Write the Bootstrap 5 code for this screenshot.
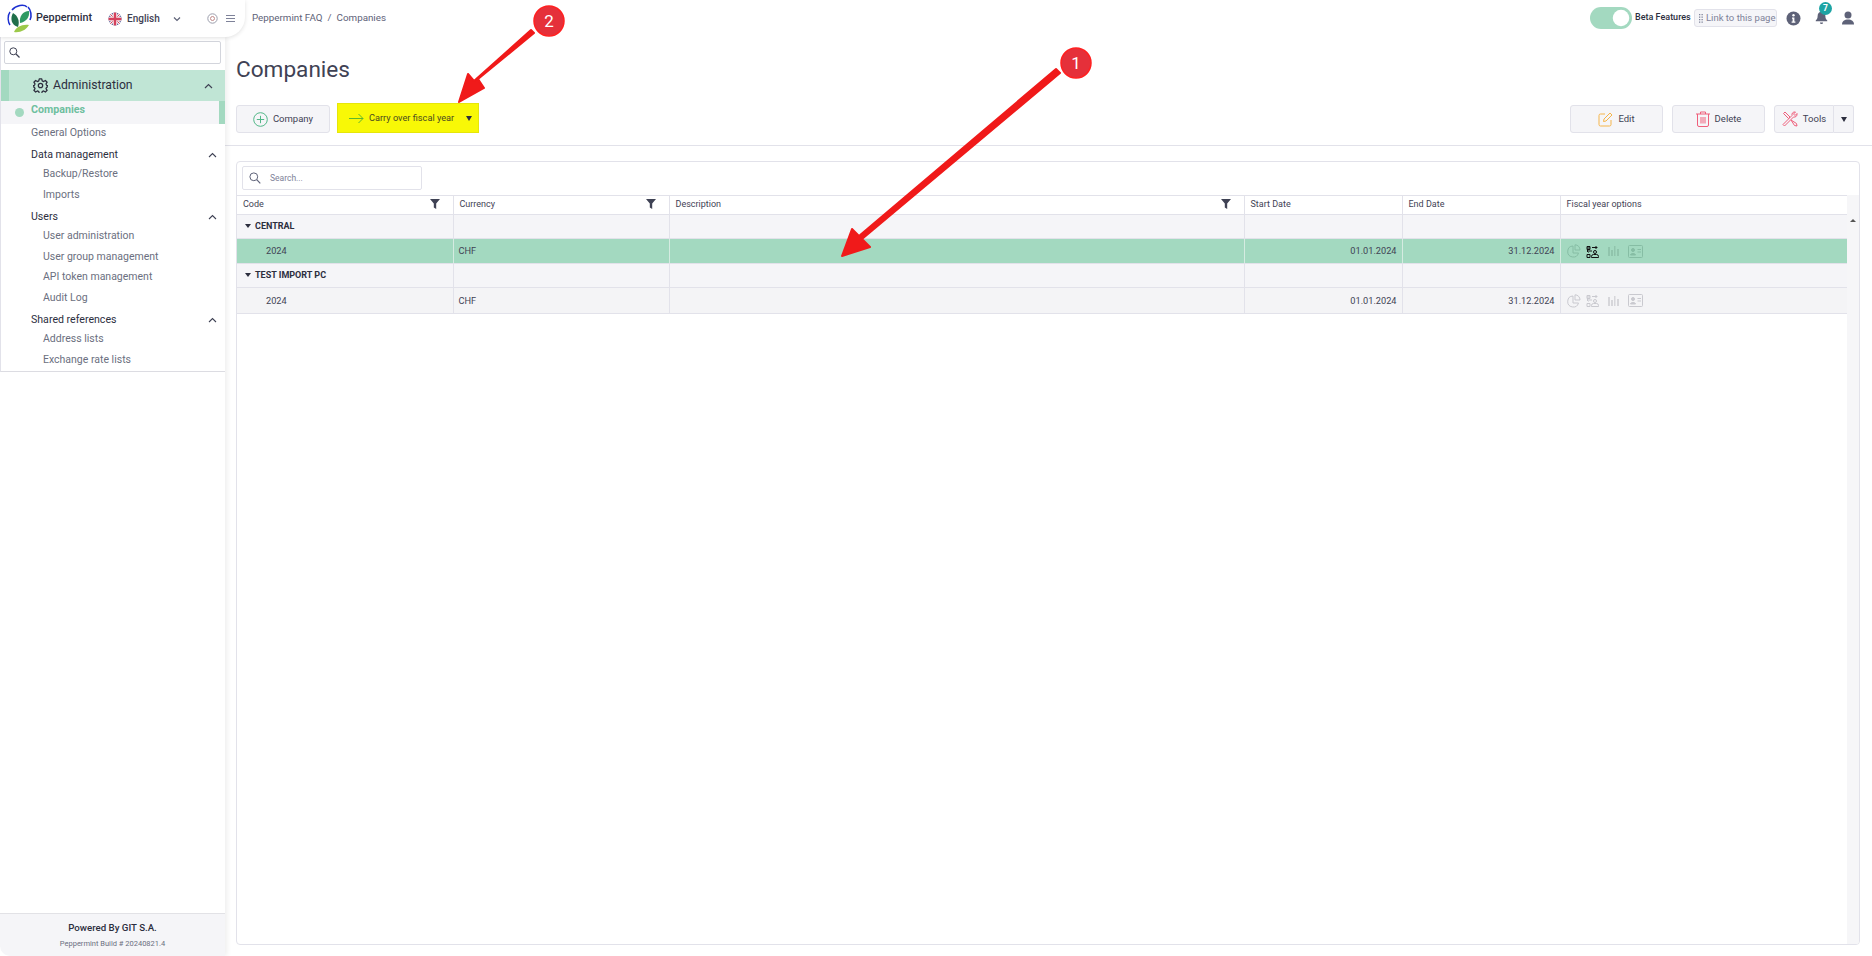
<!DOCTYPE html>
<html lang="en"><head><meta charset="utf-8"><title>Companies</title>
<link href="https://cdn.jsdelivr.net/npm/bootstrap@5.3.0/dist/css/bootstrap.min.css" rel="stylesheet">
<style>
html,body{height:100%;overflow:hidden}
body{font-family:Roboto,"Liberation Sans",sans-serif;background:#fff;color:#3f4254;font-size:12px;width:1872px;height:956px}
.frame{height:956px;position:relative}
.topbar{height:37px}
.brandbox{width:245px;height:37px;background:#fff;border-bottom-right-radius:20px;box-shadow:0 1px 4px rgba(0,0,0,.12);padding-left:7px;z-index:3;position:relative}
.brandname{font-size:10.8px;font-weight:500;color:#2c2e3e;margin-left:3px;width:72px}
.langname{font-size:10px;font-weight:500;color:#3f4254;margin-left:5px;width:46px}
.ringicon{margin-left:26px}
.crumbs{font-size:9.8px;color:#5e6278;margin-left:7px;--bs-breadcrumb-margin-bottom:0;--bs-breadcrumb-item-padding-x:5px;--bs-breadcrumb-divider-color:#5e6278}
.crumbs .breadcrumb-item{color:#5e6278}
.beta-switch{padding:0;margin:0;min-height:0;height:22px}
.beta-switch .form-check-input{width:42px;height:22px;margin:0;background-color:#a3d9c0;border:0;float:none;display:block}
.betatext{font-size:9px;font-weight:500;color:#2c2e3e;margin-left:3px;margin-right:4px;width:55px;white-space:nowrap}
.linkpage{font-size:9.5px;color:#7e8299;background:#f5f5f8;border:1px solid #e2e2ea;border-radius:3px;height:18px;width:83px;padding:0 0 0 4px;display:inline-flex;align-items:center;gap:3px;white-space:nowrap}
.topright{padding-right:18px;padding-bottom:1px}
.infoicon{margin-left:9px}
.bellwrap{position:relative;margin-left:14px;margin-right:14px;width:13px;height:14px}
.notebadge{position:absolute;top:-9px;left:4px;width:13px;height:13px;border-radius:50%;background:#1da4a4;color:#fff;font-size:8.5px;line-height:13px;padding:0;font-weight:700;--bs-badge-padding-x:0;--bs-badge-padding-y:0}
.bodyrow{height:919px}
.sidepane{width:225px;background:#fff;box-shadow:2px 0 5px rgba(0,0,0,.07);z-index:2}
.sidemenu{border-bottom:1px solid #dcdce2;border-left:1px solid #e2e2ea;padding-bottom:1px}
.sidesearch{margin:4px 4px 6px 3px;height:23px;border:1px solid #d3d5dc;border-radius:2px;padding-left:4px}
.adminbar{height:31px;background:#c0e5d5;border-left:8px solid #a3d9c0;font-size:12.2px;color:#2c2e3e;padding-left:24px;padding-right:12px}
.adminbar span{margin-left:5px}
.activeitem{height:23px;background:#f5f5f8;border-right:6px solid #a3d9c0;line-height:18px;font-weight:700;font-size:10.7px;color:#6fbf9f;padding-left:30px;position:relative}
.activedot{position:absolute;left:14px;top:7px;width:9px;height:9px;border-radius:50%;background:#a3d9c0}
.genitem{height:17px;line-height:17px;margin-bottom:4px;padding-left:30px;color:#6b6f80;font-size:10.6px}
.groupitem{height:20px;line-height:20px;margin-top:2px;margin-bottom:-1px;padding-left:30px;padding-right:8px;color:#2c2e3e;font-size:10.6px}
.subitem{height:20.5px;line-height:20.5px;padding-left:42px;color:#6b6f80;font-size:10.5px}
.sidefoot{height:43px;background:#f5f5f8;border-top:1px solid #e2e2e6;border-bottom-left-radius:10px;color:#2c2e3e}
.sidefoot .poweredline{font-size:9.7px;font-weight:500;line-height:15px;margin-top:6px}
.sidefoot .buildline{font-size:7.5px;color:#6b6f80;line-height:12px;margin-top:3px}
.mainpane{min-width:0}
.pagetitle{font-size:22.6px;font-weight:400;color:#3f4254;margin:0;padding-left:11px;height:68px;line-height:30px;padding-top:18px}
.actionbar{height:41px;border-bottom:1px solid #e2e2ea;padding-left:11px;padding-right:18px;align-items:flex-start}
.actbtn{height:28px;background:#f5f5f8;border:1px solid #e2e2ea;border-radius:3px;font-size:9.5px;color:#3f4254;padding:0;display:inline-flex;align-items:center;justify-content:center;gap:5px;--bs-btn-hover-bg:#f5f5f8}
.btn-company{width:94px}
.yellowgroup{margin-left:7px;margin-top:-2px;height:30px;width:142px;background:#f8f806;border:1px solid #e6e60a;display:flex;align-items:center;color:#4a4a20;border-radius:0}
.yellowmain{flex:1;height:100%;background:transparent;border:0;font-size:9.2px;color:#4a4a20;padding:0 0 0 11px;display:flex;align-items:center;gap:5px;white-space:nowrap}
.caretbtn{width:19px;height:100%;background:transparent;border:0;padding:0;display:flex;align-items:center;justify-content:center}
.caretshape{width:0;height:0;border-left:3.5px solid transparent;border-right:3.5px solid transparent;border-top:5px solid #2c2e3e;display:block}
.btn-wide{width:93px;margin-right:9px}
.btn-tools{width:60px;border-radius:3px 0 0 3px;margin:0}
.btn-toolcaret{width:20px;border-left:0;border-radius:0 3px 3px 0;margin:0}
.gridcard{margin:15px 12px 0 11px;height:784px;width:1624px;border:1px solid #e2e2ea;border-radius:4px;--bs-card-border-radius:4px;overflow:hidden}
.gridsearchbar{height:33px;padding:4px 0 0 5px}
.gridsearch{width:180px;height:24px;border:1px solid #e2e2ea;border-radius:2px;padding-left:6px;font-size:8.5px;color:#7e8299}
.gridsearch span{margin-left:9px}
.gridwrap{height:749px}
.tablearea{width:1610px}
.datatable{table-layout:fixed;width:1610px;margin:0;font-size:9.2px;color:#3f4254;border-collapse:collapse;--bs-table-bg:transparent;--bs-table-border-color:#e2e2ea}
.datatable th{font-weight:400;font-size:9px;height:19px;padding:0 6px;border:1px solid #e2e2ea;background:#fff;position:relative;vertical-align:middle;color:#3f4254}
.datatable td{padding:0 5px;border:1px solid #e2e2ea;border-top:0;vertical-align:middle;background:#f5f5f8}
.datatable tr>*:first-child{border-left:0}
.datatable tr>*:last-child{border-right:0}
.grouprow td{height:24px;font-weight:700;font-size:9px;color:#2c2e3e}
.datarow td{height:26px;background:#f4f4f6}
.datarow.picked td{height:25px;background:#a3d9c0;border-left-color:#d5ebe1;border-right-color:#d5ebe1}
.grouphead{padding-left:8px!important}
.groupcaret{display:inline-block;width:0;height:0;border-left:3px solid transparent;border-right:3px solid transparent;border-top:4px solid #2c2e3e;margin-right:4px;vertical-align:1px}
.yearcell{padding-left:29px!important}
.filtericon{position:absolute;right:13px;top:3px}
.optionicons{display:flex;align-items:center;gap:5px;padding-left:1px}
.scrollgutter{width:13px;background:#f6f6f8;padding-top:20px;text-align:center}
.scrollup{display:block;width:0;height:0;border-left:3.5px solid transparent;border-right:3.5px solid transparent;border-bottom:3px solid #555;margin:4px auto 0}
.annot{position:absolute;left:0;top:0;width:1872px;height:956px;pointer-events:none;z-index:5}
.annot text{font-family:Roboto,"Liberation Sans",sans-serif;font-size:17px;fill:#fff}
</style></head>
<body>
<div class="frame">
<div class="topbar d-flex align-items-center">
  <div class="brandbox d-flex align-items-center">
    <svg width="26" height="30" viewBox="0 0 26 30"><path d="M5 6C9 1 17 0 20 3" fill="none" stroke="#1c2fd0" stroke-width="1.6"/><path d="M21 3c3 3 4 9 2 13" fill="none" stroke="#1c2fd0" stroke-width="1.6"/><path d="M3 8C0 12 1 18 3 21" fill="none" stroke="#1c2fd0" stroke-width="1.4"/><path d="M11 23C4 21 3 14 6 9c5 3 7 8 5 14z" fill="#1f6f4a"/><path d="M13 19C12 12 16 7 22 7c1 6-3 11-9 12z" fill="#2f9a63"/><path d="M7 28c2-5 8-8 15-7-3 5-9 8-15 7z" fill="#9cc94a"/></svg>
    <span class="brandname">Peppermint</span>
    <svg width="14" height="14" viewBox="0 0 14 14"><defs><clipPath id="fc"><circle cx="7" cy="7" r="6.500"/></clipPath></defs><g clip-path="url(#fc)"><rect width="14" height="14" fill="#3b4a8c"/><path d="M0 0L14 14M14 0L0 14" stroke="#f3e9ea" stroke-width="3"/><path d="M0 0L14 14M14 0L0 14" stroke="#d5405c" stroke-width="1"/><path d="M7 0V14M0 7H14" stroke="#f3e9ea" stroke-width="4.400"/><path d="M7 0V14M0 7H14" stroke="#d5405c" stroke-width="2.400"/></g></svg>
    <span class="langname">English</span>
    <svg width="8" height="6" viewBox="0 0 8 6"><path d="M1 1.500L4 4.500L7 1.500" fill="none" stroke="#5e6278" stroke-width="1.200"/></svg>
    <svg class="ringicon" width="11" height="11" viewBox="0 0 11 11"><circle cx="5.500" cy="5.500" r="4.700" fill="none" stroke="#9a9dab"/><circle cx="5.500" cy="5.500" r="2" fill="none" stroke="#c08a8a" stroke-width="1"/></svg>
    <svg class="ms-2" width="9" height="9" viewBox="0 0 9 9"><path d="M0 1.500H9M0 4.500H9M0 7.500H9" stroke="#7e8299" stroke-width="1.100"/></svg>
  </div>
  <ol class="breadcrumb crumbs"><li class="breadcrumb-item">Peppermint FAQ</li><li class="breadcrumb-item active">Companies</li></ol>
  <div class="ms-auto d-flex align-items-center topright">
    <div class="form-check form-switch beta-switch"><input class="form-check-input" type="checkbox" checked aria-label="Beta Features"></div>
    <span class="betatext">Beta Features</span>
    <span class="linkpage"><svg width="4" height="9" viewBox="0 0 4 9" fill="#7e8299"><path d="M0 0h1.300v1.300H0zM2.500 0h1.300v1.300H2.500zM0 2.500h1.300v1.300H0zM2.500 2.500h1.300v1.300H2.500zM0 5h1.300v1.300H0zM2.500 5h1.300v1.300H2.500zM0 7.500h1.300v1.300H0zM2.500 7.500h1.300v1.300H2.500z"/></svg>Link to this page</span>
    <svg class="infoicon" width="15" height="15" viewBox="0 0 15 15"><circle cx="7.500" cy="7.500" r="7" fill="#5e6278"/><circle cx="7.500" cy="4.200" r="1.200" fill="#fff"/><path d="M6 6.500h2.400v4h1v1.200H5.600v-1.200h1v-2.800H6z" fill="#fff"/></svg>
    <div class="bellwrap">
      <svg class="d-block" width="13" height="14" viewBox="0 0 15 17"><path d="M7.500 1c3 0 4.700 2.200 4.700 5.200 0 3.300 1.300 4.400 2.300 5.300v1H.5v-1c1-.9 2.300-2 2.300-5.300C2.800 3.200 4.500 1 7.500 1z" fill="#5e6278"/><path d="M5.600 14h3.800a1.900 1.900 0 0 1-3.800 0z" fill="#5e6278"/></svg>
      <span class="badge notebadge">7</span>
    </div>
    <svg width="12" height="14" viewBox="0 0 12 14"><circle cx="6" cy="4" r="3.500" fill="#5e6278"/><path d="M0 13.500C0 10 2.500 8.500 6 8.500s6 1.500 6 5z" fill="#5e6278"/></svg>
  </div>
</div>
<div class="bodyrow d-flex">
  <aside class="sidepane d-flex flex-column">
    <div class="sidemenu">
      <div class="sidesearch d-flex align-items-center"><svg width="11" height="11" viewBox="0 0 11 11"><circle cx="4.300" cy="4.300" r="3.500" fill="none" stroke="#3f4254" stroke-width="1"/><path d="M7 7L10.500 10.500" stroke="#3f4254" stroke-width="1.200"/></svg></div>
      <div class="adminbar d-flex align-items-center">
        <svg width="15" height="15" viewBox="0 0 24 24" fill="none" stroke="#2c2e3e" stroke-width="2" stroke-linejoin="round"><circle cx="12" cy="12" r="3.500"/><path d="M10 1.500h4l.7 3.200 2.300 1 2.800-1.800 2.800 2.800-1.800 2.800 1 2.300 3.200.7v1.400l-3.200.7-1 2.300 1.800 2.800-2.800 2.800-2.800-1.800-2.300 1-.7 3.200h-4l-.7-3.200-2.300-1-2.800 1.800-2.800-2.800 1.800-2.800-1-2.300-3.200-.7v-1.400l3.200-.7 1-2.300L1.400 6.700l2.800-2.800L7 5.700l2.300-1z"/></svg>
        <span>Administration</span>
        <svg class="ms-auto" width="9" height="6" viewBox="0 0 9 6"><path d="M1 5L4.500 1.500L8 5" fill="none" stroke="#3f4254" stroke-width="1.200"/></svg>
      </div>
      <div class="activeitem"><i class="activedot"></i>Companies</div>
      <div class="genitem">General Options</div>
      <div class="groupitem d-flex justify-content-between align-items-center"><span>Data management</span><svg width="9" height="6" viewBox="0 0 9 6"><path d="M1 5L4.500 1.500L8 5" fill="none" stroke="#3f4254" stroke-width="1.100"/></svg></div>
      <div class="subitem">Backup/Restore</div>
      <div class="subitem">Imports</div>
      <div class="groupitem d-flex justify-content-between align-items-center"><span>Users</span><svg width="9" height="6" viewBox="0 0 9 6"><path d="M1 5L4.500 1.500L8 5" fill="none" stroke="#3f4254" stroke-width="1.100"/></svg></div>
      <div class="subitem">User administration</div>
      <div class="subitem">User group management</div>
      <div class="subitem">API token management</div>
      <div class="subitem">Audit Log</div>
      <div class="groupitem d-flex justify-content-between align-items-center"><span>Shared references</span><svg width="9" height="6" viewBox="0 0 9 6"><path d="M1 5L4.500 1.500L8 5" fill="none" stroke="#3f4254" stroke-width="1.100"/></svg></div>
      <div class="subitem">Address lists</div>
      <div class="subitem">Exchange rate lists</div>
    </div>
    <div class="sidefoot mt-auto text-center">
      <div class="poweredline">Powered By GIT S.A.</div>
      <div class="buildline">Peppermint Build # 20240821.4</div>
    </div>
  </aside>
  <main class="mainpane flex-grow-1">
    <h1 class="pagetitle">Companies</h1>
    <div class="actionbar d-flex">
      <button class="btn actbtn btn-company" type="button"><svg width="15" height="15" viewBox="0 0 15 15"><circle cx="7.500" cy="7.500" r="6.800" fill="none" stroke="#52b788" stroke-width="1"/><path d="M7.500 3.800V11.200M3.800 7.500H11.200" stroke="#52b788" stroke-width="1"/></svg>Company</button>
      <div class="yellowgroup">
        <button class="yellowmain" type="button"><svg width="15" height="11" viewBox="0 0 15 11"><path d="M0 5.500H14M9.500 1L14 5.500L9.500 10" fill="none" stroke="#5cb82e" stroke-width="1"/></svg>Carry over fiscal year</button>
        <button class="caretbtn" type="button" aria-label="More"><i class="caretshape"></i></button>
      </div>
      <div class="ms-auto d-flex">
        <button class="btn actbtn btn-wide" type="button"><svg width="15" height="15" viewBox="0 0 15 15" fill="none" stroke="#f5b54a" stroke-width="1"><path d="M13 8V12.500a1.500 1.500 0 0 1-1.500 1.500H2.500A1.500 1.500 0 0 1 1 12.500V3.500A1.500 1.500 0 0 1 2.500 2H7"/><path d="M5.500 9.500L6 7L12 1L14 3L8 9z"/></svg>Edit</button>
        <button class="btn actbtn btn-wide" type="button"><svg width="14" height="16" viewBox="0 0 14 16" fill="none" stroke="#ef5f7b" stroke-width="1"><path d="M0 3H14M4.500 3V1H9.500V3M1.500 3V14a1.500 1.500 0 0 0 1.500 1.500H11A1.500 1.500 0 0 0 12.500 14V3M5 6V12.500M7 6V12.500M9 6V12.500"/></svg>Delete</button>
        <button class="btn actbtn btn-tools" type="button"><svg width="16" height="16" viewBox="0 0 16 16" fill="none" stroke="#ef5f7b" stroke-width="1"><path d="M1 13.500L10 4.500C9.500 2.500 11 .5 13.500 1L11.500 3L13 4.500L15 2.500C15.500 5 13.500 6.500 11.500 6L2.500 15z"/><path d="M1.500 2.500L3 1L8 6L6.500 7.500zM9 9L14.500 12.500L15 15L12.500 14.500z"/></svg>Tools</button>
        <button class="btn actbtn btn-toolcaret" type="button" aria-label="More tools"><i class="caretshape"></i></button>
      </div>
    </div>
    <section class="card gridcard">
      <div class="gridsearchbar"><div class="gridsearch d-flex align-items-center"><svg width="12" height="12" viewBox="0 0 12 12"><circle cx="4.800" cy="4.800" r="3.900" fill="none" stroke="#5e6278" stroke-width="1"/><path d="M7.700 7.700L11.300 11.300" stroke="#5e6278" stroke-width="1.200"/></svg><span>Search...</span></div></div>
      <div class="gridwrap d-flex">
        <div class="tablearea">
          <table class="table datatable">
            <colgroup><col style="width:216px"><col style="width:216px"><col style="width:575px"><col style="width:158px"><col style="width:158px"><col style="width:287px"></colgroup>
            <thead><tr>
              <th>Code<svg class="filtericon" width="10" height="10" viewBox="0 0 10 10"><path d="M0 0H10L6.200 4.500V10L3.800 8.500V4.500z" fill="#3f4254"/></svg></th>
              <th>Currency<svg class="filtericon" width="10" height="10" viewBox="0 0 10 10"><path d="M0 0H10L6.200 4.500V10L3.800 8.500V4.500z" fill="#3f4254"/></svg></th>
              <th>Description<svg class="filtericon" width="10" height="10" viewBox="0 0 10 10"><path d="M0 0H10L6.200 4.500V10L3.800 8.500V4.500z" fill="#3f4254"/></svg></th>
              <th>Start Date</th><th>End Date</th><th>Fiscal year options</th>
            </tr></thead>
            <tbody>
              <tr class="grouprow"><td class="grouphead"><i class="groupcaret"></i>CENTRAL</td><td></td><td></td><td></td><td></td><td></td></tr>
              <tr class="datarow picked"><td class="yearcell">2024</td><td>CHF</td><td></td><td class="text-end">01.01.2024</td><td class="text-end">31.12.2024</td>
                <td><div class="optionicons">
                  <svg width="14" height="14" viewBox="0 0 14 14" fill="none" stroke="#86bda4"><path d="M6 2A5.500 5.500 0 1 0 11.500 9H6z"/><path d="M8 .8A5 5 0 0 1 13 6H8z"/></svg>
                  <svg width="13" height="13" viewBox="0 0 13 13" fill="none" stroke="#111" stroke-width="1"><path d="M1 3h3M1 1.500h3v3H1zM6 2.500h5M9.500 1l1.500 1.500L9.500 4M6 6H1M2.500 4.500L1 6l1.500 1.500"/><circle cx="9" cy="7" r="1.500"/><path d="M5.500 12.500v-1a2 2 0 0 1 2-2h3a2 2 0 0 1 2 2v1zM1 9.500h3v3H1z"/></svg>
                  <svg class="ms-1" width="11" height="10" viewBox="0 0 11 10" fill="#90c4ac"><path d="M0 1h2v9H0zM3 4h2v6H3zM6 0h1.500v10H6zM9 3h2v7H9z"/></svg>
                  <svg class="ms-1" width="15" height="13" viewBox="0 0 15 13" fill="none" stroke="#86bda4"><rect x=".5" y=".5" width="14" height="12" rx="1"/><circle cx="5" cy="5" r="1.500" fill="#86bda4"/><path d="M2.500 10c0-2 5-2 5 0zM9.500 4.500h3.500M9.500 7h3.500" fill="#86bda4"/></svg>
                </div></td></tr>
              <tr class="grouprow"><td class="grouphead"><i class="groupcaret"></i>TEST IMPORT PC</td><td></td><td></td><td></td><td></td><td></td></tr>
              <tr class="datarow"><td class="yearcell">2024</td><td>CHF</td><td></td><td class="text-end">01.01.2024</td><td class="text-end">31.12.2024</td>
                <td><div class="optionicons">
                  <svg width="14" height="14" viewBox="0 0 14 14" fill="none" stroke="#c9c9cf"><path d="M6 2A5.500 5.500 0 1 0 11.500 9H6z"/><path d="M8 .8A5 5 0 0 1 13 6H8z"/></svg>
                  <svg width="13" height="13" viewBox="0 0 13 13" fill="none" stroke="#c9c9cf" stroke-width="1"><path d="M1 3h3M1 1.500h3v3H1zM6 2.500h5M9.500 1l1.500 1.500L9.500 4M6 6H1M2.500 4.500L1 6l1.500 1.500"/><circle cx="9" cy="7" r="1.500"/><path d="M5.500 12.500v-1a2 2 0 0 1 2-2h3a2 2 0 0 1 2 2v1zM1 9.500h3v3H1z"/></svg>
                  <svg class="ms-1" width="11" height="10" viewBox="0 0 11 10" fill="#d6d6da"><path d="M0 1h2v9H0zM3 4h2v6H3zM6 0h1.500v10H6zM9 3h2v7H9z"/></svg>
                  <svg class="ms-1" width="15" height="13" viewBox="0 0 15 13" fill="none" stroke="#c9c9cf"><rect x=".5" y=".5" width="14" height="12" rx="1"/><circle cx="5" cy="5" r="1.500" fill="#c9c9cf"/><path d="M2.500 10c0-2 5-2 5 0zM9.500 4.500h3.500M9.500 7h3.500" fill="#c9c9cf"/></svg>
                </div></td></tr>
            </tbody>
          </table>
        </div>
        <div class="scrollgutter"><i class="scrollup"></i></div>
      </div>
    </section>
  </main>
</div>
<svg class="annot" viewBox="0 0 1872 956" aria-hidden="true">
  <path d="M1060 73L862 239L870 247L842 256L852 229L859 236L1056 69z" fill="#f01a1a" stroke="#f01a1a" stroke-width="2" stroke-linejoin="round"/>
  <path d="M534 33L478 79L484 88L459 102L468 74L474 81L531 30z" fill="#f01a1a" stroke="#f01a1a" stroke-width="2" stroke-linejoin="round"/>
  <circle cx="1076" cy="63" r="15" fill="#e5303a" stroke="#ff2020" stroke-width="1.500"/>
  <circle cx="549" cy="21" r="15" fill="#e5303a" stroke="#ff2020" stroke-width="1.500"/>
  <text x="1076" y="69" text-anchor="middle">1</text>
  <text x="549" y="27" text-anchor="middle">2</text>
</svg>
</div>
</body></html>
